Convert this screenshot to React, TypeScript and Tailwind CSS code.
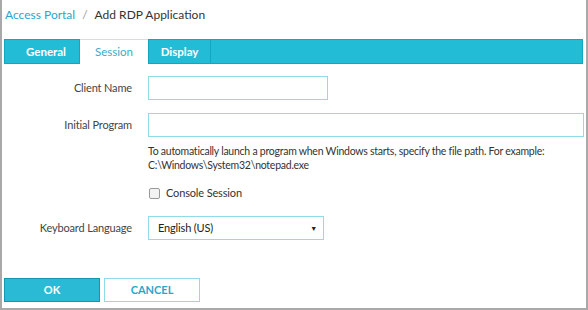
import React from 'react';

const font = { fontFamily: 'Lato, "Open Sans", sans-serif' };

const App = () => {
  return (
    <div className="w-[588px] h-[310px] bg-white" style={font}>
      <div className="h-full border-l-2 border-r-2 border-b-2 border-[#a9a9a9] flex flex-col">
        <div className="h-[29px] pl-[3px] pt-[6px] text-[12px] flex items-start">
          <span className="text-[#2ba6c9]">Access Portal</span>
          <span className="text-[#9a9a9a] mx-[7px]">/</span>
          <span className="text-[#333]">Add RDP Application</span>
        </div>

        <div className="ml-[2px] mt-[10px] w-[579px] flex h-[25px] bg-[#23bcd7] border border-[#12a6c1] text-[11.5px] font-bold">
          <div className="w-[75px] pl-[8px] flex items-center justify-center text-white border-r border-[#12a6c1]">General</div>
          <div className="w-[68px] -mt-px h-[25px] bg-white border-t border-[#dcdcdc] flex items-center justify-center text-[#36aecb] font-normal">Session</div>
          <div className="w-[63px] flex items-center justify-center text-white border-x border-[#12a6c1]">Display</div>
          <div className="flex-1" />
        </div>

        <div className="flex flex-col text-[11px] tracking-[-0.15px] text-[#444] mt-[12px]">
          <div className="flex items-center h-[24px]">
            <div className="w-[130px] text-right">Client Name</div>
            <div className="w-[16px]" />
            <div className="w-[180px] h-[24px] border border-[#8fdbe8]" />
          </div>
          <div className="flex items-center h-[24px] mt-[13px]">
            <div className="w-[130px] text-right">Initial Program</div>
            <div className="w-[16px]" />
            <div className="w-[436px] h-[24px] border border-[#8fdbe8]" />
          </div>
          <div className="ml-[146px] mt-[7px] text-[10.5px] tracking-[-0.25px] leading-[14px] text-[#333] whitespace-nowrap">
            <div>To automatically launch a program when Windows starts, specify the file path. For example:</div>
            <div>C:\Windows\System32\notepad.exe</div>
          </div>
          <div className="ml-[147px] mt-[14px] flex items-center h-[14px] text-[#333]">
            <div className="w-[11px] h-[11px] border border-[#9a9a9a] rounded-[2px] bg-[#f3f3f3]" />
            <span className="ml-[6px]">Console Session</span>
          </div>
          <div className="flex items-center h-[24px] mt-[16px]">
            <div className="w-[130px] text-right">Keyboard Language</div>
            <div className="w-[16px]" />
            <div className="w-[176px] h-[24px] border border-[#8fdbe8] flex items-center justify-between pl-[9px] pr-[6px] text-[#222] text-[11px]">
              <span>English (US)</span>
              <span className="text-[7px] leading-none">▼</span>
            </div>
          </div>
        </div>

        <div className="flex-1" />
        <div className="flex ml-[2px] mb-[6px] gap-[4px] text-[11px] font-bold">
          <div className="w-[96px] h-[24px] bg-[#2bbad5] border border-[#1496af] text-white flex items-center justify-center">OK</div>
          <div className="w-[96px] h-[24px] bg-white border border-[#8fdbe8] text-[#2ba6c9] flex items-center justify-center">CANCEL</div>
        </div>
      </div>
    </div>
  );
};

export default App;
